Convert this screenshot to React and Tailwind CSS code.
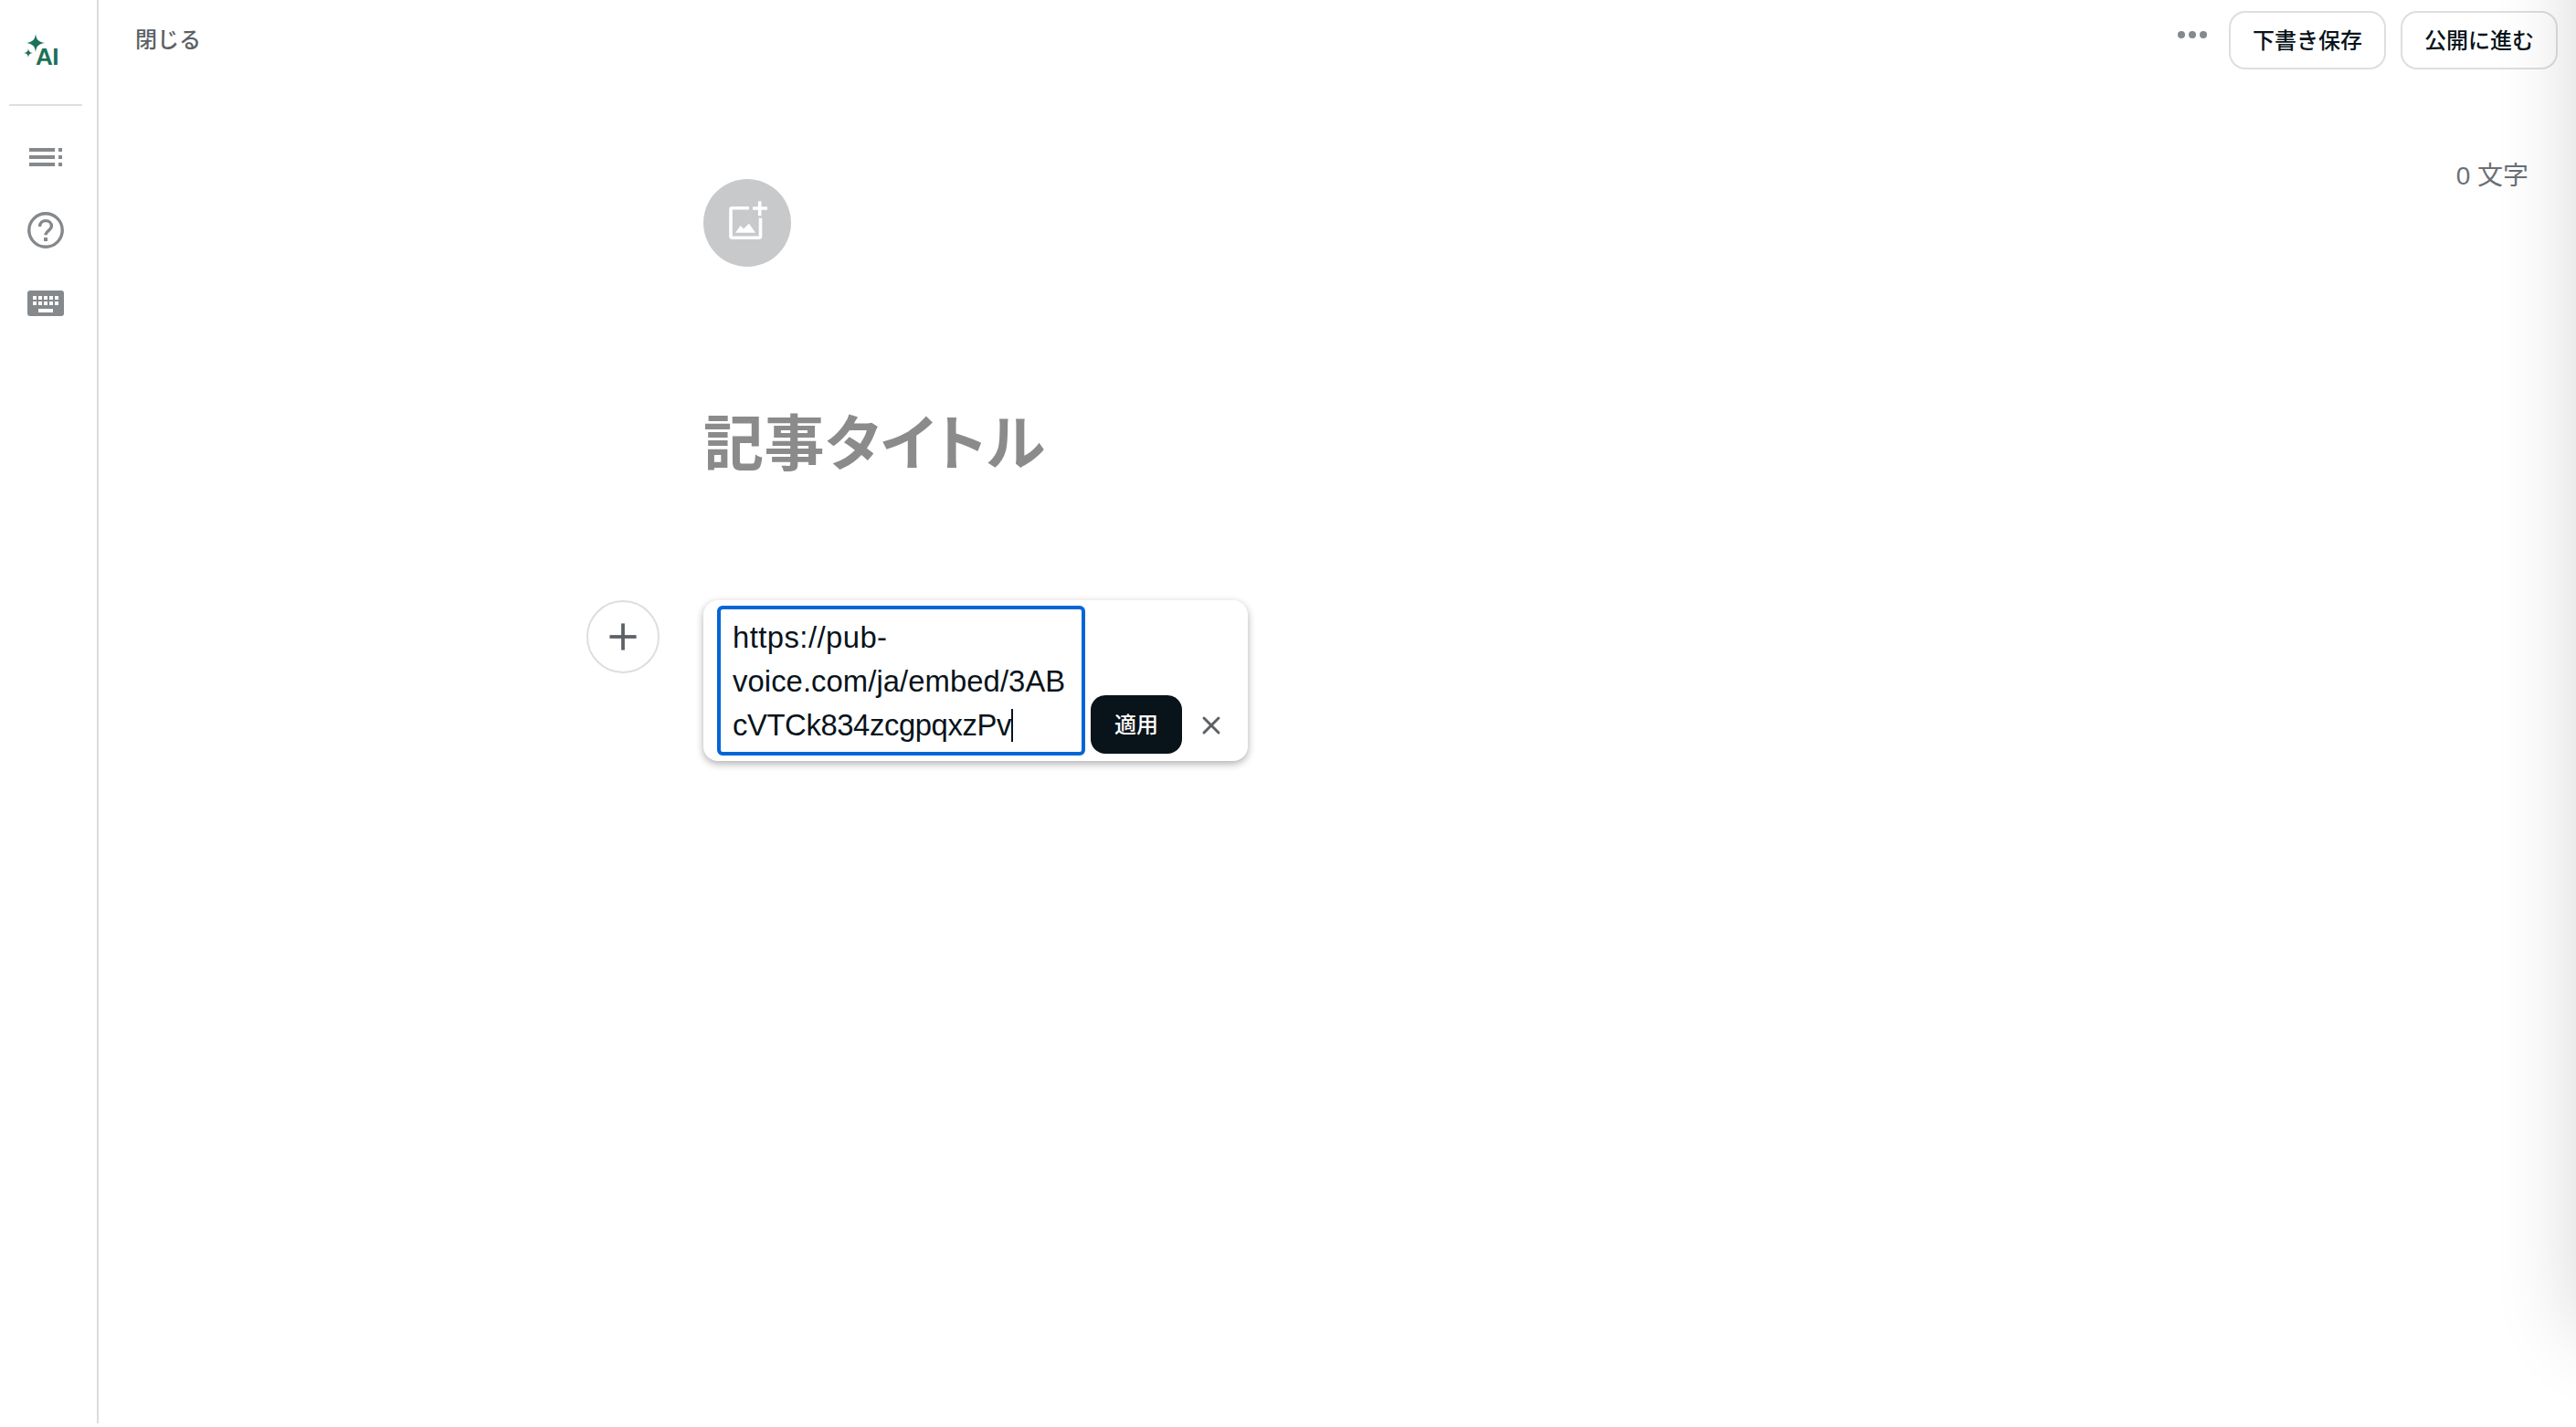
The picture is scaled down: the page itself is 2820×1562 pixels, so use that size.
import { Plus, X } from 'lucide-react';

const cjk = 'font-["Liberation_Sans","Noto_Sans_CJK_JP",sans-serif]';

function Sparkle({ className }) {
  return (
    <svg viewBox="0 0 24 24" className={className} fill="currentColor">
      <path d="M12 0C12.8 7 15 10.600 24 12C15 13.400 12.800 17 12 24C11.200 17 9 13.400 0 12C9 10.600 11.200 7 12 0Z" />
    </svg>
  );
}

function AiLogo() {
  return (
    <div className="relative w-[40px] h-[36px] text-[#1a7259]">
      <Sparkle className="absolute left-[-2px] top-0 w-[22px] h-[20px]" />
      <Sparkle className="absolute left-[-4px] top-[16px] w-[10px] h-[10px]" />
      <span className="absolute left-[9px] top-[12px] text-[26px] leading-[26px] font-bold tracking-[-0.5px] font-['Liberation_Sans',sans-serif]">AI</span>
    </div>
  );
}

function OutlineIcon() {
  return (
    <svg viewBox="0 0 36 20" className="w-[36px] h-[20px]" fill="#85898c">
      <rect x="0" y="0" width="28" height="4" />
      <rect x="0" y="8" width="28" height="4" />
      <rect x="0" y="16" width="28" height="4" />
      <rect x="32" y="0" width="4" height="4" />
      <rect x="32" y="8" width="4" height="4" />
      <rect x="32" y="16" width="4" height="4" />
    </svg>
  );
}

function HelpIcon() {
  return (
    <svg viewBox="0 0 40 40" className="w-[40px] h-[40px]" fill="none" stroke="#85898c">
      <circle cx="20" cy="20" r="18.200" strokeWidth="3.400" />
      <path d="M13.600 16c0-4 2.900-6.400 6.400-6.400s6.400 2.400 6.400 6c0 4.600-6.400 4.800-6.400 9.600" strokeWidth="3.400" />
      <rect x="18" y="28" width="4" height="4" fill="#85898c" stroke="none" />
    </svg>
  );
}

function KeyboardIcon() {
  const xs = [6, 12, 18, 24, 30];
  return (
    <svg viewBox="0 0 40 28" className="w-[40px] h-[28px]">
      <rect width="40" height="28" rx="3" fill="#85898c" />
      {xs.map((x) => (
        <rect key={x} x={x} y="6" width="4" height="4" fill="#fff" />
      ))}
      {xs.map((x) => (
        <rect key={x} x={x} y="12" width="4" height="4" fill="#fff" />
      ))}
      <rect x="12" y="20" width="16" height="4" fill="#fff" />
    </svg>
  );
}

function ImageAddIcon() {
  return (
    <svg viewBox="0 0 48 48" className="w-[48px] h-[48px]" fill="none" stroke="#fff" strokeWidth="3.600">
      <path d="M26 7.700H7.500a1.500 1.500 0 0 0-1.500 1.500V38.500a1.500 1.500 0 0 0 1.500 1.700H37a1.500 1.500 0 0 0 1.500-1.700V18.700" />
      <path d="M37.700 0.300V16.300M30 8H46" />
      <path d="M11 34.700L16.700 27L20 30.500L26 24.700L33 34.700Z" fill="#fff" stroke="none" />
    </svg>
  );
}

export default function App() {
  return (
    <div className={`relative h-[1562px] w-[2820px] overflow-hidden bg-white ${cjk}`}>
      <div className="flex h-[1558px]">
        <aside className="w-[108px] shrink-0 border-r-2 border-[#dcdcdc] pr-[6px] flex flex-col items-center">
          <div className="pt-[37px] pb-[8px]">
            <AiLogo />
          </div>
          <div className="w-[80px] mt-[33px] h-[2px] bg-[#dedede]" />
          <div className="mt-[46px] h-[20px]"><OutlineIcon /></div>
          <div className="mt-[50px] h-[40px]"><HelpIcon /></div>
          <div className="mt-[46px] h-[28px]"><KeyboardIcon /></div>
        </aside>

        <main className="flex-1 min-w-0">
          <header className="flex items-center pt-[12px] pl-[40px] pr-[20px]">
            <button className="text-[24px] leading-[32px] font-medium text-[#5c6166] mr-auto">閉じる</button>
            <div className="flex gap-[4px] mr-[24px] mb-[12px]">
              <span className="w-[8px] h-[8px] rounded-full bg-[#85898c]" />
              <span className="w-[8px] h-[8px] rounded-full bg-[#85898c]" />
              <span className="w-[8px] h-[8px] rounded-full bg-[#85898c]" />
            </div>
            <button className="w-[172px] h-[64px] pt-[1px] rounded-[18px] border-2 border-[#dedede] text-[24px] font-medium text-[#08131a] mr-[16px]">下書き保存</button>
            <button className="w-[172px] h-[64px] pt-[1px] rounded-[18px] border-2 border-[#dedede] text-[24px] font-medium text-[#08131a]">公開に進む</button>
          </header>

          <div className="flex pl-[534px] pr-[52px] pt-[95px]">
            <div>
              <div className="ml-[128px] mt-[25px] w-[96px] h-[96px] rounded-full bg-[#c8c9cb] flex items-center justify-center">
                <ImageAddIcon />
              </div>
              <h1 className="ml-[128px] mt-[154px] text-[66px] leading-[80px] font-bold tracking-[0.6px] text-[#8b8b8b] [font-feature-settings:'palt']">記事タイトル</h1>

              <div className="flex items-start gap-[48px] mt-[131px]">
                <button className="w-[80px] h-[80px] rounded-full border-2 border-[#dedede] flex items-center justify-center text-[#5c6166]">
                  <Plus size={50} strokeWidth={1.800} strokeLinecap="butt" />
                </button>
                <div className="flex items-end w-[596px] h-[176px] rounded-[16px] bg-white shadow-[0_3px_8px_rgba(0,0,0,0.32)] pl-[15px] pt-[6px] pb-[6px]">
                  <div className="w-[403px] h-[164px] rounded-[6px] border-4 border-[#0066d6] pl-[13px] pr-[10px] pt-[7px] text-[32.800px] leading-[48px] text-[#08131a]">
                    <div className="tracking-[0.45px]">https://pub-</div>
                    <div className="tracking-[0.07px]">voice.com/ja/embed/3AB</div>
                    <div className="flex items-center tracking-[-0.4px]">cVTCk834zcgpqxzPv<span className="w-[2px] h-[36px] bg-[#08131a]" /></div>
                  </div>
                  <button className="ml-[6px] mb-[2px] w-[100px] h-[64px] pt-[2px] rounded-[16px] bg-[#08131a] text-white text-[24px] font-medium">適用</button>
                  <button className="ml-[16px] mb-[17px] text-[#5c6166]">
                    <X size={32} strokeWidth={2.200} />
                  </button>
                </div>
              </div>
            </div>
            <div className="ml-auto mt-[2px] text-[28px] leading-[40px] text-[#6b7075]">0 文字</div>
          </div>
        </main>
      </div>
      {/* edge shadow from the off-screen panel */}
      <div className="absolute left-[2820px] top-[-100px] w-[100px] h-[1560px] shadow-[0_0_90px_rgba(0,0,0,0.16)]" />
    </div>
  );
}
